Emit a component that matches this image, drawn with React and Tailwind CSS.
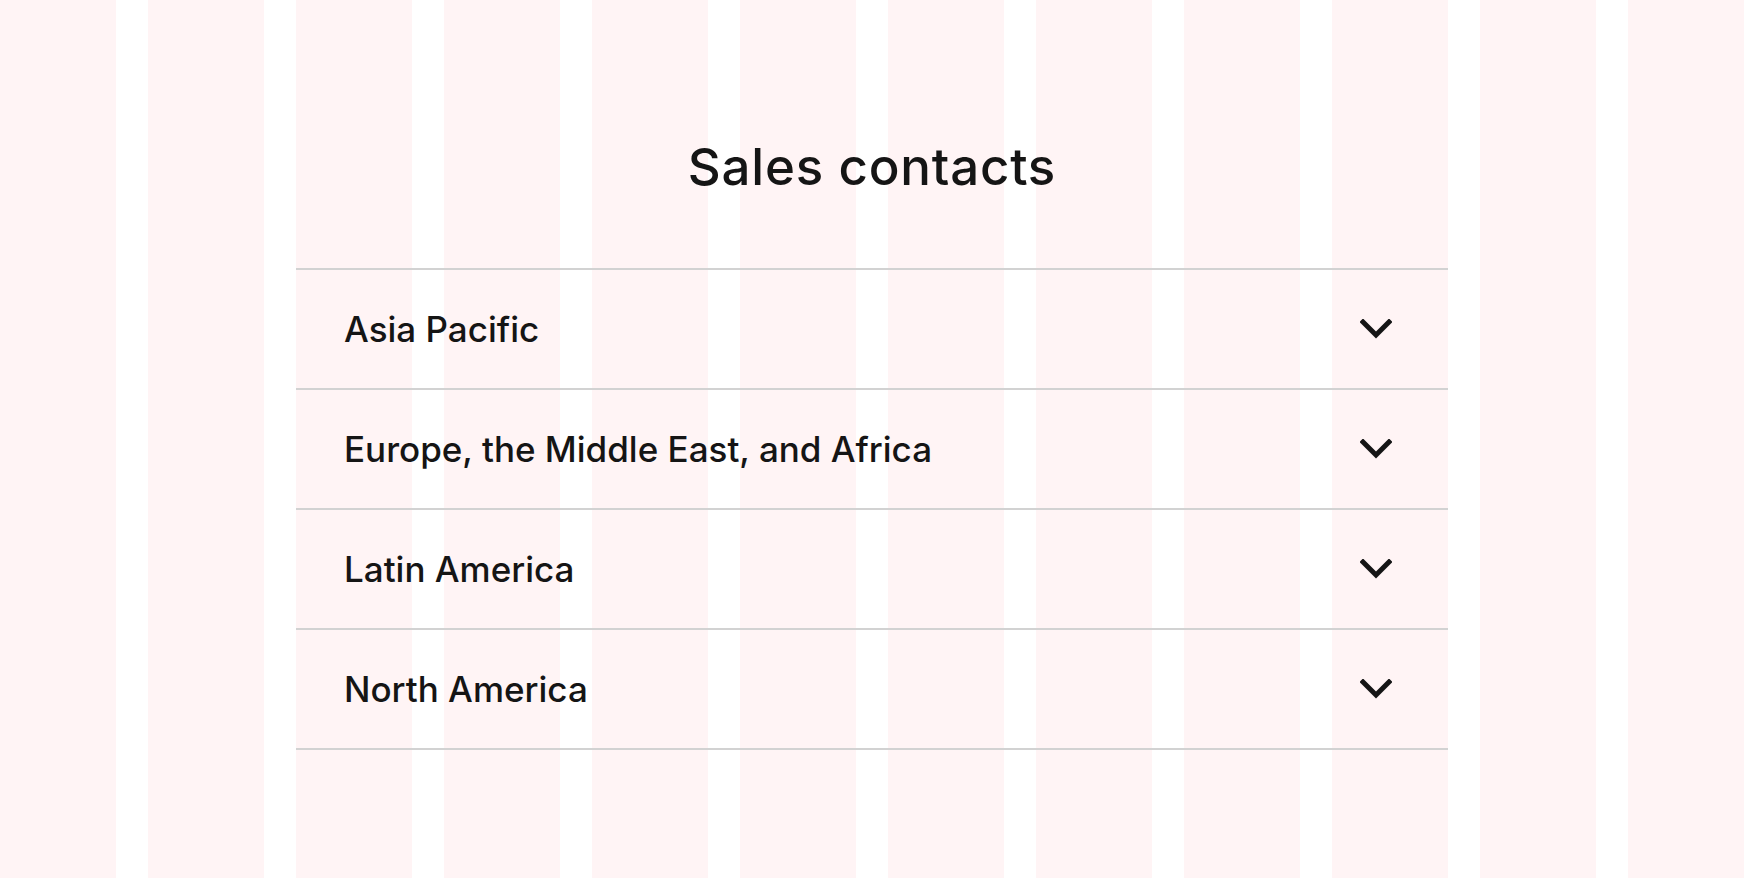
import React from "react";

const regions = [
  "Asia Pacific",
  "Europe, the Middle East, and Africa",
  "Latin America",
  "North America",
];

function Chevron() {
  return (
    <svg width="32" height="20" viewBox="0 0 32 20" fill="none" className="shrink-0">
      <polyline points="3,3 16,16 29,3" stroke="#151515" strokeWidth="5" strokeLinecap="square" strokeLinejoin="miter" />
    </svg>
  );
}

export default function App() {
  return (
    <div className="min-h-[878px] w-full bg-white bg-[repeating-linear-gradient(90deg,#fff4f5_0px,#fff4f5_116px,#ffffff_116px,#ffffff_148px)] text-[#151515] font-['Inter',sans-serif]">
      <div className="grid grid-cols-12 gap-x-8">
        <h2 className="col-span-12 pt-[137px] pb-[71px] text-center text-[51px] leading-[60px] font-medium tracking-[0.8px]">
          Sales contacts
        </h2>

        {/* accordion spans columns 3-10 */}
        <div className="col-start-3 col-span-8 border-b-2 border-[#d2d2d2]">
          {regions.map((name) => (
            <button
              key={name}
              className="flex h-[120px] w-full items-center justify-between border-t-2 border-[#d2d2d2] pl-12 pr-[56px] text-left"
            >
              <span className="text-[35px] font-medium">{name}</span>
              <Chevron />
            </button>
          ))}
        </div>
      </div>
    </div>
  );
}
